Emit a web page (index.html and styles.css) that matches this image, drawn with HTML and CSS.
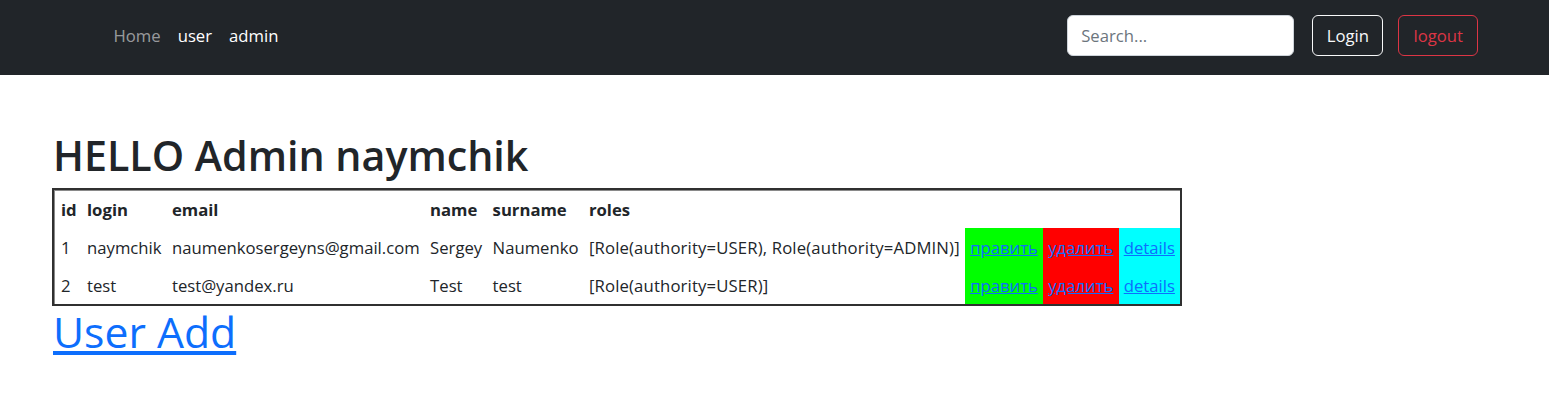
FILE: index.html
```html
<!DOCTYPE html>
<html lang="ru">
<head>
<meta charset="utf-8">
<title>Admin</title>
<link rel="stylesheet" href="styles.css">
</head>
<body>
<nav class="navbar">
  <ul class="nav-links">
    <li><a class="nav-link muted" href="#">Home</a></li>
    <li><a class="nav-link" href="#">user</a></li>
    <li><a class="nav-link" href="#">admin</a></li>
  </ul>
  <form class="nav-form">
    <input class="search" type="search" placeholder="Search...">
    <button class="btn btn-light" type="button">Login</button>
    <button class="btn btn-danger" type="button">logout</button>
  </form>
</nav>
<main class="main">
  <h1 class="title">HELLO Admin naymchik</h1>
  <table class="users">
    <thead>
      <tr><th>id</th><th>login</th><th>email</th><th>name</th><th>surname</th><th>roles</th><th></th><th></th><th></th></tr>
    </thead>
    <tbody>
      <tr>
        <td>1</td><td>naymchik</td><td>naumenkosergeyns@gmail.com</td><td>Sergey</td><td>Naumenko</td>
        <td class="roles">[Role(authority=USER), Role(authority=ADMIN)]</td>
        <td class="c-green"><a href="#">править</a></td>
        <td class="c-red"><a href="#">удалить</a></td>
        <td class="c-cyan"><a href="#">details</a></td>
      </tr>
      <tr>
        <td>2</td><td>test</td><td>test@yandex.ru</td><td>Test</td><td>test</td>
        <td class="roles">[Role(authority=USER)]</td>
        <td class="c-green"><a href="#">править</a></td>
        <td class="c-red"><a href="#">удалить</a></td>
        <td class="c-cyan"><a href="#">details</a></td>
      </tr>
    </tbody>
  </table>
  <h1 class="add"><a href="#">User Add</a></h1>
</main>
</body>
</html>
```
FILE: styles.css
```css
* { box-sizing: border-box; }
body {
  margin: 0;
  font-family: "Open Sans", "Noto Sans", sans-serif;
  font-size: 16.7px;
  line-height: 1.5;
  color: #212529;
  background: #fff;
}
a { color: #0d6efd; }

.navbar {
  height: 75px;
  background: #212529;
  display: flex;
  align-items: center;
  justify-content: space-between;
  padding: 0 71px 4px 105px;
}
.nav-links {
  list-style: none;
  margin: 0;
  padding: 0;
  display: flex;
}
.nav-link {
  display: block;
  padding: 8px 8.5px;
  color: #fff;
  text-decoration: none;
}
.nav-link.muted { color: rgba(255, 255, 255, 0.55); }

.nav-form {
  display: flex;
  align-items: center;
}
.search {
  width: 227px;
  height: 41px;
  padding: 0 13px;
  font: inherit;
  color: #212529;
  background: #fff;
  border: 1px solid #ced4da;
  border-radius: 6px;
  margin-right: 18px;
}
.search::placeholder { color: #6c757d; }
.btn {
  height: 41px;
  padding: 0 13.5px;
  font: inherit;
  background: transparent;
  border: 1px solid;
  border-radius: 6px;
  cursor: pointer;
}
.btn-light { color: #f8f9fa; border-color: #f8f9fa; margin-right: 15px; }
.btn-danger { color: #dc3545; border-color: #dc3545; padding: 0 14px; }

.main { padding: 55px 0 0 53px; }
.title {
  margin: 0 0 7px;
  font-size: 41.2px;
  font-weight: 600;
  line-height: 1.24;
}
.users {
  border-collapse: collapse;
  border: 2px solid #303030;
  box-shadow: inset 1px 1px 0 #8a8a8a;
  margin-left: -1px;
}
.users th, .users td {
  padding: 6.5px 5.2px;
  text-align: left;
  vertical-align: middle;
  white-space: nowrap;
}
.users th { font-weight: 700; }
.users th:first-child, .users td:first-child { padding-left: 7px; }
.users .roles { letter-spacing: 0.15px; }
.c-green { background: #00ff00; }
.c-red { background: #ff0000; }
.c-cyan { background: #00ffff; }
.add {
  margin: 0;
  font-size: 42.7px;
  font-weight: 400;
  line-height: 1.2;
}
```
